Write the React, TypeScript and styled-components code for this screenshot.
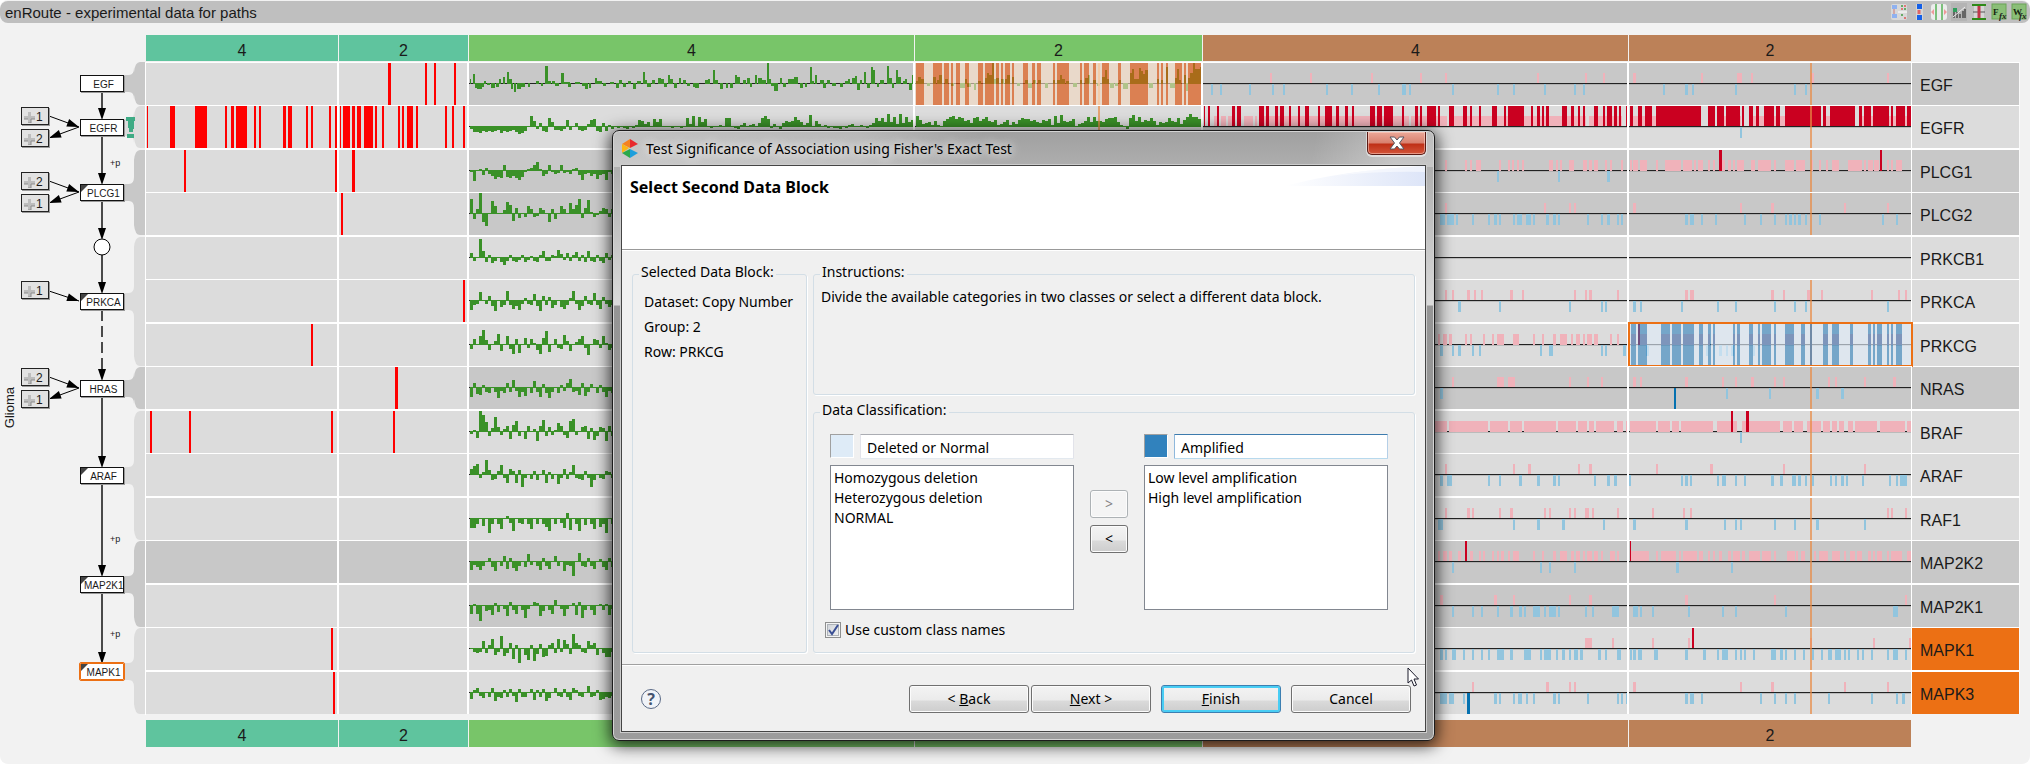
import React from 'react';
import styled, { createGlobalStyle, css } from 'styled-components';

const GlobalStyle = createGlobalStyle`
  * { box-sizing: border-box; }
  body { margin: 0; background: #fff; font-family: "Liberation Sans", Arial, sans-serif; color: #1a1a1a; }
  button, input, select { font: inherit; color: inherit; }
`;

/* ---------- view shell ---------- */

const View = styled.div`
  position: relative;
  min-height: 764px;
  padding-top: 1px;
  background: #f2f2f2;
  border-radius: 8px;
  overflow: hidden;
`;

const ViewBar = styled.header`
  display: flex;
  align-items: center;
  justify-content: space-between;
  height: 22px;
  padding: 0 3px 0 5px;
  background: #bfbfbf;
  border-radius: 8px;
`;

const ViewTitle = styled.h1`
  margin: 0;
  padding-top: 2px;
  font-size: 15px;
  line-height: 18px;
  font-weight: 400;
`;

const Tools = styled.div`
  display: flex;
  gap: 4px;
`;

const Tool = styled.button`
  display: block;
  width: 16px;
  height: 18px;
  padding: 0;
  border: 0;
  background: none;
`;

const Columns = styled.main`
  display: grid;
  grid-template-columns: 146px minmax(0, 1fr);
  padding: 12px 10px 16px 0;
`;

/* ---------- pathway ---------- */

const Pathway = styled.section`
  position: relative;
  height: 700px;
`;

const PathwayLines = styled.svg`
  position: absolute;
  inset: 0;
`;

const PathName = styled.div`
  position: absolute;
  left: 2px;
  top: 352px;
  writing-mode: vertical-rl;
  transform: rotate(180deg);
  font-size: 13px;
  line-height: 16px;
`;

const GeneNode = styled.div<{ $top: number; $selected?: boolean }>`
  position: absolute;
  left: 80px;
  top: ${(p) => p.$top}px;
  width: 44px;
  height: 17px;
  padding: 0 0 0 3px;
  border: 1px solid #111;
  background: #fff;
  box-shadow: 1px 1px 0 #999;
  font-size: 10px;
  line-height: 17px;
  text-align: center;
  white-space: nowrap;
  ${(p) => p.$selected && css`
    outline: 1px solid #ec7014;
    border-color: #ec7014;
    border-radius: 1px;
    box-shadow: none;
  `}
`;

const Fold = styled.span`
  position: absolute;
  left: 0;
  top: 0;
  border-top: 7px solid #444;
  border-right: 7px solid transparent;
`;

const Branch = styled.button<{ $top: number }>`
  position: absolute;
  left: 21px;
  top: ${(p) => p.$top}px;
  display: flex;
  align-items: center;
  gap: 1px;
  width: 28px;
  height: 18px;
  padding: 2px 0 0 2px;
  border: 1px solid #222;
  background: #e2e2e2;
  box-shadow: 1px 1px 0 #999;
  font-size: 12px;
  line-height: 14px;
`;

const Phospho = styled.span<{ $top: number }>`
  position: absolute;
  left: 110px;
  top: ${(p) => p.$top}px;
  font-size: 9px;
  line-height: 12px;
`;

/* ---------- data table ---------- */

const Table = styled.table`
  display: grid;
  grid-template-columns: 193fr 130fr 446fr 288fr 426fr 283fr 108px;
  grid-template-rows: 27px repeat(7, 43px 44px) 43px 33px;
  thead, tbody, tfoot, tr { display: contents; }
`;

const GroupHead = styled.th<{ $tone: string; $foot?: boolean }>`
  display: block;
  min-width: 0;
  height: ${(p) => (p.$foot ? 27 : 26)}px;
  margin-top: ${(p) => (p.$foot ? 6 : 0)}px;
  padding: 5px 0 0;
  border-right: 1px solid #f2f2f2;
  background: ${(p) => p.$tone};
  font-size: 16px;
  line-height: 22px;
  font-weight: 400;
  text-align: center;
`;

const Cell = styled.td<{ $dark: boolean; $even: boolean; $last: boolean }>`
  display: block;
  position: relative;
  min-width: 0;
  padding: 0;
  border-top: 1px solid #fff;
  border-bottom: ${(p) => (p.$even ? 1 : 0)}px solid #fff;
  border-right: ${(p) => (p.$last ? 1 : 2)}px solid #fff;
  background: ${(p) => (p.$dark ? '#c8c8c8' : '#dcdcdc')};
`;

const SelectedFrame = styled.span`
  position: absolute;
  inset: -2px -2px -1px -1px;
  border: 2px solid #ec7014;
`;

const RowName = styled.th<{ $dark: boolean; $even: boolean; $active: boolean }>`
  display: block;
  padding: 4px 0 0 8px;
  border-top: 1px solid #fff;
  border-bottom: ${(p) => (p.$even ? 1 : 0)}px solid #fff;
  border-right: 1px solid #fafafa;
  background: ${(p) => (p.$active ? '#ec7014' : p.$dark ? '#c8c8c8' : '#dcdcdc')};
  font-size: 16px;
  line-height: 38px;
  font-weight: 400;
  text-align: left;
`;

const Track = styled.svg`
  display: block;
  width: 100%;
  height: 42px;
  shape-rendering: crispEdges;
`;

type Bar = { x: number; w: number; h: number };

/* "x:w" pairs; the width may be left out */
const spans = (s: string, w: number): Bar[] =>
  s.split(' ').filter(Boolean).map((t) => {
    const [x, ww] = t.split(':').map(Number);
    return { x, w: ww || w, h: 0 };
  });

/* evenly spaced signed heights */
const steps = (s: string, x0: number, step: number): Bar[] =>
  s.split(' ').filter(Boolean).map((t, i) => ({ x: x0 + i * step, w: step, h: Number(t) }));

/* "x:w:h" triples */
const triples = (s: string): Bar[] =>
  s.split(' ').filter(Boolean).map((t) => {
    const [x, w, h] = t.split(':').map(Number);
    return { x, w, h };
  });

const Mutation = ({ from, to, data }: { from: number; to: number; data: string }) => (
  <Track viewBox={`${from} 0 ${to - from} 42`} preserveAspectRatio="none">
    {spans(data, 6).map((b) => <rect key={b.x} x={b.x} y="0" width={b.w} height="42" fill="#f00" />)}
  </Track>
);

const Expression = ({ from, to, bars, bands, pale, hover }: {
  from: number; to: number; bars: Bar[]; bands?: string; pale?: boolean; hover?: boolean;
}) => (
  <Track viewBox={`${from} 0 ${to - from} 42`} preserveAspectRatio="none">
    <rect x={from} y="20" width={to - from} height="1" fill="#222" />
    {bars.map((b) => (
      <rect key={b.x} x={b.x} y={b.h > 0 ? 20 - b.h : 20} width={b.w} height={b.h > 0 ? b.h + 1 : 1 - b.h} fill="#3a9128" />
    ))}
    {bands && <Bands from={from} to={to} bands={bands} strong="rgba(229,89,18,.65)" weak="rgba(255,228,203,.6)" />}
    {pale && <rect x="564" y="0" width="6" height="42" fill="#f5c79f" opacity=".8" />}
    {hover && <rect x="564" y="0" width="6" height="42" fill="#e88a45" opacity=".7" />}
  </Track>
);

const Bands = ({ from, to, bands, strong, weak }: {
  from: number; to: number; bands: string; strong: string; weak: string;
}) => {
  const list = spans(bands, 6);
  const gaps: Bar[] = [];
  let at = from;
  list.forEach((b) => { if (b.x > at) gaps.push({ x: at, w: b.x - at, h: 0 }); at = b.x + b.w; });
  if (at < to) gaps.push({ x: at, w: to - at, h: 0 });
  return (
    <>
      {gaps.map((b) => <rect key={b.x} x={b.x} y="0" width={b.w} height="42" fill={weak} />)}
      {list.map((b) => <rect key={b.x} x={b.x} y="0" width={b.w} height="42" fill={strong} />)}
    </>
  );
};

type Copies = { low?: string; loss?: string; high?: string; deep?: string };

const CopyNumber = ({ from, to, data, cover, bands, hover }: {
  from: number; to: number; data: Copies; cover?: boolean; bands?: string; hover?: boolean;
}) => (
  <Track viewBox={`${from} 0 ${to - from} 42`} preserveAspectRatio="none">
    <rect x={from} y="20" width={to - from} height="1" fill="#222" />
    <rect x={from} y="21" width={to - from} height="1" fill="#999" opacity=".5" />
    {spans(data.low ?? '', 5).map((b) => <rect key={b.x} x={b.x} y="10" width={b.w} height={cover ? 11 : 10} fill="#f0b2ba" />)}
    {spans(data.loss ?? '', 5).map((b) => <rect key={b.x} x={b.x} y="21" width={b.w} height="11" fill="#92c5de" />)}
    {spans(data.high ?? '', 5).map((b) => <rect key={b.x} x={b.x} y="0" width={b.w} height={cover ? 21 : 20} fill="#ca0020" />)}
    {spans(data.deep ?? '', 6).map((b) => <rect key={b.x} x={b.x} y="21" width={b.w} height="21" fill="#0571b0" />)}
    {bands && <Bands from={from} to={to} bands={bands} strong="rgba(49,130,189,.6)" weak="rgba(222,235,247,.65)" />}
    {hover && <rect x="1020" y="0" width="5" height="42" fill={bands ? '#6f89a6' : '#e88a45'} opacity={bands ? 1 : 0.7} />}
  </Track>
);

const SECOND_BANDS = '575:12 592:23 650:22 677:22 704:28 744:10 767 779 829 839:7 869:10 891 901:22 931 958:23 998:10 1053:12 1075:18 1120:7 1165:7 1177 1187:13 1212 1222 1234:15';

type Row = {
  name: string; dark: boolean; active?: boolean; cover?: boolean;
  m1?: string; m2?: string; e1: Bar[]; e2?: Bar[];
  c1: Copies; c2: Copies;
};

const E0 = 30;

const ROWS: Row[] = [
  {
    name: 'EGF', dark: true, m2: '1164:9 1275 1302 1362',
    e1: triples('30:3:4 39:6:9 45:6:-4 51:15:-5 66:6:-3 72:6:2 80:9:-1 93:12:-4 108:9:-3 117:6:4 129:6:6 140:7:11 147:9:4 153:6:-5 162:6:-8 171:12:-5 183:12:-3 204:6:-3 228:9:2 243:6:-2 255:9:17 264:9:2 276:8:2 285:12:-2 303:9:10 312:18:1 324:9:-3 345:15:1 366:9:-2 375:9:-5 387:6:-4 405:6:5 411:15:2 429:9:-2 450:12:1 468:9:-4 477:8:3 490:9:-3 505:9:2 520:9:-5 530:12:2 548:6:11 554:6:3 562:12:-3 575:9:3 594:9:5 603:9:4 612:9:-3 625:5:8 631:9:4 642:9:-4 657:6:5 670:9:3 680:9:-2 699:6:-3 705:12:-4 735:9:3 745:6:4 759:6:13 765:9:3 780:9:-5 798:6:-4 810:9:-4 825:6:8 831:9:6 850:8:3 860:9:5 870:6:-3 885:6:8 894:12:5 906:12:3 921:6:20 927:6:4 933:9:-2 942:12:-7 960:6:5 970:9:-3 985:6:4 991:12:4 1003:12:6 1020:9:-4 1035:6:-3 1050:6:16 1056:6:2 1065:6:8 1080:12:3 1089:9:-4 1101:9:3 1115:12:-2 1140:9:-3 1155:9:2 1164:6:4 1175:9:5 1185:6:7 1191:9:-6 1200:6:3 1212:6:11 1220:9:-4 1233:6:16 1239:6:13 1251:6:-3 1260:12:3 1281:6:17 1287:9:5 1296:6:-4 1308:6:13 1314:9:6 1328:7:2 1335:6:4 1347:9:-6 1356:3:8'),
    e2: triples('18:6:2 24:9:6 33:9:4 50:9:-2 69:9:6 81:6:3 87:9:8 105:9:4 123:9:-2 150:15:-4 165:6:4 171:12:-3 192:6:-6 204:9:2 225:6:5 231:6:10 237:9:8 246:6:20 252:6:4 258:9:5 273:9:4 285:6:4 292:9:8 306:6:6 320:9:-2 345:9:3 354:12:-4 370:9:3 384:9:3 405:9:-4 429:6:3 441:9:3 450:6:8 456:9:4 468:9:2 490:12:-3 510:6:3 525:9:5 533:6:8 549:9:3 560:9:-2 576:9:6 585:6:13 591:6:4 600:12:-4 615:9:-2 627:6:3 640:15:-5 660:6:10 666:6:14 672:15:4 687:6:15 693:6:12 699:6:9 705:9:13 718:12:-4 741:6:4 753:6:3 768:6:16 780:15:-4 795:6:5 801:6:14 807:6:3 822:6:8 828:6:-7 834:6:5 840:9:10 849:6:20 855:6:14 861:9:14 870:4:16'),
    c1: { low: '-324 -224 -72 49 112 341 460 505', loss: '-470 -448 -376 -318 -291 -184 -122 -55 5:10 22 129 241 281 358 433 455' },
    c2: { low: '580:7 749 839:12 874 1022:8 1212', loss: '655 709:8 727 834 981 1008' },
  },
  {
    name: 'EGFR', dark: false,
    m1: '441:3 510:15 585:36 675 693:9 708:33 762 777 849:9 864:12 918 933 987 1005',
    m2: '1020:3 1029:21 1056:9 1071:12 1092:27 1125 1146 1194 1206 1221:18 1248 1335 1356 1389',
    e1: steps('-2 -5 -5 -6 -4 -5 -4 -5 -4 -3 -6 -4 -5 -4 -3 -5 -7 -6 -4 0 10 5 -2 3 -4 -5 8 4 -3 -3 -4 -2 6 -3 0 3 -3 -4 -3 2 6 7 -4 -5 3 -4 1 -2 0 -1 0 -1 -2 0 -1 1 6 5 2 4 0 7 4 7 0 0 0 -1 0 0 -1 0 8 2 10 0 9 4 7 0 -1 0 0 1 0 8 8 0 -1 -2 1 3 0 1 2 0 3 8 10 7 -1 2 0 -2 3 5 4 5 9 6 4 1 3 11 0 5 2 0 1 -1 0 -1 -1 -2 0 -1 1 2 0 0 1 0 -1 1 3 8 5 8 4 12 4 9 2 12 3 9 4 6', E0, 9),
    e2: steps('10 6 2 3 4 1 5 1 0 5 7 9 10 7 9 8 5 6 3 8 9 5 7 9 5 4 6 1 2 4 6 1 4 2 6 8 7 7 5 6 4 3 6 5 7 1 10 3 11 5 4 5 7 0 2 3 5 9 4 9 5 5 4 7 8 8 9 4 1 0 -2 8 11 5 9 4 6 5 8 5 1 4 3 4 8 5 4 8 2 6 9 12 9 9 7 8', 18, 9),
    c1: {
      low: '-463:7 -445:12 -428:10 -388:22 -361 -351:373 27:90 134:175 309:154 470:83',
      high: '-488:3 -478 -455 -418:8 -406:10 -351:12 -333:8 -311:8 -299:10 -276 -254 -236:10 -204 -187:17 -159:8 -137:8 -119 -75:12 -57:12 -40:22 5 37:8 50 67:23 95 122:12 157:10 174 197 229:12 259 269:40 326 341:7 353 363:8 403:12 426:7 443 455 483:10 505 515:13 533:7 545 562',
    },
    c2: {
      low: '580:12 602:8 627:122 789:60 869:180 1053:40 1142:130', loss: '846',
      high: '572:8 592:10 610:17 637:112 767:17 789:17 811:35 851 869:10 886:8 906:25 936:10 958:90 1053:7 1070:62 1142:8 1155:17 1177:40 1222 1234:23 1262:10',
    },
  },
  {
    name: 'PLCG1', dark: true, cover: true, m1: '552 1005', m2: '1056:9',
    e1: steps('-1 -10 0 1 -4 2 -3 -5 -8 -6 -7 5 -6 -7 -5 -7 -9 -6 -1 1 2 5 8 1 -5 -3 5 -1 -3 -2 5 -2 -1 -3 1 2 -4 -9 -3 -2 -5 -3 -8 -4 -3 -9 -1 -3 -4', E0, 9),
    c1: { low: '112 162 174 189:12 246 269 280 291 304 371:10 388 398 421:12 455:10 470:8 483:10 510 522 550', loss: '241 393 515:8' },
    c2: { low: '572 580:12 597:18 638 659:40 704:24 733 743:10 767 780 802:6 816:8 829 839:17 873:10 891:32 931 958:23 986:22 1022:7 1043 1060 1075:19 1115:35 1155 1166:11 1180:12 1212 1221 1234:15', high: '794:7 1195' },
  },
  {
    name: 'PLCG2', dark: true, m2: '1023',
    e1: steps('14 -5 4 20 -8 -12 0 12 7 0 0 3 11 8 -7 5 -4 0 -3 7 4 -3 -2 5 3 0 -8 4 -5 0 7 4 0 10 4 8 14 -4 5 13 1 -3 -1 2 5 4 -3 4', E0, 9),
    c1: { low: '112 358 421 433', loss: '99:13 117:17 139 179 219 234:7 246 281 291:13 314:12 331 363:8 381:7 393 465 500 515:8 540 550' },
    c2: { low: '580:8 846 924:7 1105 1212', loss: '709:8 722:10 749 784 856 896 931 958 968:8 981 991:7 1008 1043 1200 1234' },
  },
  {
    name: 'PRKCB1', dark: false,
    e1: steps('4 -3 0 18 6 -4 2 -5 -3 0 -4 -7 -3 2 -3 -4 -2 2 -4 -2 1 -3 -4 2 6 -3 -3 2 1 7 3 -2 4 -3 2 5 -3 2 -4 6 -3 -4 2 -3 -5 4 -2 2', E0, 9),
    c1: {}, c2: {},
  },
  {
    name: 'PRKCA', dark: false, m2: '1389',
    e1: steps('-9 -4 -3 8 0 -3 4 -5 -10 0 -6 -4 9 -4 -8 -5 -9 -3 2 -3 -4 6 -5 -10 4 -4 3 -7 -4 0 -6 -8 -4 2 9 -3 -9 -5 4 -3 -4 7 -4 -8 3 -3 -6 -4', E0, 9),
    c1: { low: '112 129 167:7 184 202 274:8 304 433 460 470:8 540', loss: '144:8 246 421 500 510' },
    c2: { low: '709:8 722:10 924:7 953 1013:7 1048 1172 1239 1257', loss: '580:7 597 699 789 834 931 981 1008 1212' },
  },
  {
    name: 'PRKCG', dark: false, cover: true, m1: '933',
    e1: steps('-4 5 0 8 14 4 -5 0 3 10 -6 0 8 -4 -9 5 -8 0 6 -3 5 1 -5 -9 6 13 -7 0 5 -3 -4 9 3 -6 0 2 5 8 -3 -10 0 5 4 -3 8 1 -5 -3', E0, 9),
    c1: { low: '95 107:10 122:7 162 174 207 229 241:18 281:15 331 353 381:7 398:18 426 438:10 455 465:12 483:10 523 540', loss: '99:8 129 144:8 179 197 348 371:10 500 510 556:7' },
    c2: { low: '575:12 592:23 650:22 677:22 704:28 744:10 767 779 829 839:7 869:10 891 901:22 931 958:23 998:10 1053:12 1075:18 1120:7 1165:7 1177 1187:13 1212 1222 1234:15', high: '592', loss: '612:8 762 794:7 811 824:7 879' },
  },
  {
    name: 'NRAS', dark: true, m2: '1185:9',
    e1: steps('-9 4 -6 -7 2 -4 -5 0 -4 -10 -3 -5 4 -4 7 -3 -9 -4 -8 0 -5 6 -4 -9 3 -5 -10 -4 0 -5 2 -3 4 8 -4 -3 -7 4 -8 -4 3 0 -5 2 -4 -9 -3 -5', E0, 9),
    c1: { low: '129 241:18 269:17 421 465 500', loss: '99:8' },
    c2: { low: '580:8 597 709:8 801 834 873:7 931 953 1065 1083 1155 1227:7', loss: '811 918 1035:8 1098:7', deep: '682' },
  },
  {
    name: 'BRAF', dark: false, cover: true, m1: '450 567 993', m2: '1179',
    e1: steps('-2 1 -6 20 16 9 -4 3 14 4 -3 2 5 -7 6 10 -4 0 -7 5 0 2 -9 5 11 -4 4 -3 1 8 5 -3 -6 10 12 -3 0 4 5 -7 3 -8 -4 4 3 -9 5 -4', E0, 9),
    c1: { low: '80:37 122:97 224:45 274:30 309:79 393:45 443:22 470:13 488:45 540:15 562:4' },
    c2: { low: '572:66 642:30 677:17 699:80 789:50 851:95 953:23 981:22 1013:35 1053:17 1075:13 1093:12 1115:12 1132:55 1195:62 1262:10', high: '824 861:8', loss: '846' },
  },
  {
    name: 'ARAF', dark: false,
    e1: steps('5 8 10 -3 2 14 4 -5 -4 3 9 -3 -8 5 3 -8 4 -12 -3 0 -4 3 -5 0 4 -8 2 -4 0 -9 -3 5 -4 2 9 -3 -4 -5 3 -3 -12 -5 0 -3 -4 3 2 -3', E0, 9),
    c1: { low: '112 281 319:7 443 470:8', loss: '99:8 117:12 219 246 296:8 341:7 381:7 393 483 515:8 533:7' },
    c2: { low: '637 772:7 953 1155', loss: '570 699 709:8 722 789 801:10 834 856 924:7 946:7 976:10 991:7 1008 1025 1070 1083 1098:7 1110 1150 1217 1234 1244:18' },
  },
  {
    name: 'RAF1', dark: false,
    e1: steps('-9 -9 -5 0 -7 0 -14 -5 0 -5 -10 0 2 -4 -12 0 -4 -5 0 -5 -10 0 -5 0 -5 -8 -12 0 -5 0 -4 -9 5 -11 0 -5 -12 0 -6 0 -5 -10 0 -8 -5 -14 0 -5', E0, 9),
    c1: { low: '112 167:7 179 246 274:8 358 371 421 433 460:10 478 540', loss: '95:12 281 341:7 403:8 505' },
    c2: { low: '627 704 722 1212 1222 1257', loss: '580:8 709:8 806 834 846 931 981 1035:8 1155' },
  },
  {
    name: 'MAP2K2', dark: true,
    e1: steps('-8 -3 -5 -8 -4 0 3 -5 -9 0 -4 5 -7 3 -6 -9 -4 0 -5 7 -3 0 -4 -8 3 -4 -7 0 5 -4 0 -9 -3 -4 -14 0 8 -4 -5 3 -4 -7 0 2 -5 -8 3 -5', E0, 9),
    c1: { low: '95 107:10 122:7 144:8 174:7 197 207 229 241 251:8 269 281:15 331 353 381:7 398:18 426:8 438:10 455 465:12 483:10 500 523:12 540', loss: '129 348 371 433', high: '162' },
    c2: { low: '575:45 637 650:37 694 704:35 744:10 767 779 794:7 816:8 829:17 851:7 869:27 901:22 931 963:20 986 998:10 1030 1043:22 1075:20 1105 1120:12 1137:13 1165:7 1177 1187:13 1212 1222:27 1262:10', high: '572:4', loss: '687:7 824' },
  },
  {
    name: 'MAP2K1', dark: true,
    e1: steps('-8 1 -8 -15 0 -5 -4 -9 2 -6 0 -3 -10 3 -4 -8 0 -4 -12 -3 0 3 2 -10 -5 0 -4 -8 5 0 -3 -10 -3 0 2 -9 3 -12 -4 0 -4 -9 0 1 -4 1 -9 -3', E0, 9),
    c1: { low: '99:8 234:7 281 421 470:8', loss: '129 179 202 241 274:7 296:8 309 331:17 358 371:17 393 460 478 528:17' },
    c2: { low: '709:8 931 1257', loss: '580:12 597 627 717 801 834 958 1227:12' },
  },
  {
    name: 'MAPK1', dark: false, active: true, m1: '993',
    e1: steps('0 -3 -4 -3 7 -4 3 9 -6 -3 12 -7 -4 5 -10 3 -14 0 -6 -11 3 -12 -5 4 -8 -7 3 5 -4 9 -3 8 4 -5 14 5 3 -3 -4 7 3 5 -6 0 -4 -8 -8 -3', E0, 9),
    c1: { low: '460:18 528', loss: '99:8 112 129:10 157 179 202 219 241:18 274:7 309:17 348 358:18 388 403:8 421 433:10 448:7 493:7 510 540:10' },
    c2: { low: '627 717 1020 1177 1268:4', high: '727', loss: '572 580:7 592:10 632:10 709:8 754:8 789 801:15 834 846 856 879 923:13 946:7 958 981 1003 1025 1048 1065:10 1083:15 1105 1115 1137 1150 1172 1212 1227:12 1257' },
  },
  {
    name: 'MAPK3', dark: false, active: true, m1: '999',
    e1: steps('-6 2 4 -3 -5 0 -4 4 -8 -4 -5 2 -4 3 -3 -9 3 -4 -4 0 3 -7 2 -4 3 -8 -5 0 4 -3 -4 3 -4 -7 4 2 -3 -4 0 6 -4 -3 2 -7 -6 -4 -5 -3', E0, 9),
    c1: { low: '179 363:7 421 433', loss: '99:18 122:12 157 234:7 246 281 294:10 314 331 381:7 393 465 540 550 562', deep: '167:7' },
    c2: { low: '580:7 846 923:8 1105 1212', loss: '709:8 722:10 749 896 931 958 981 1065 1172 1234 1249:8' },
  },
];

const GROUPS = [
  { label: '4', tone: '#5fc49e' }, { label: '2', tone: '#5fc49e' },
  { label: '4', tone: '#78c569' }, { label: '2', tone: '#78c569' },
  { label: '4', tone: '#bc8158' }, { label: '2', tone: '#bc8158' },
];

const DataTable = () => (
  <Table>
    <thead>
      <tr>{GROUPS.map((g, i) => <GroupHead key={i} $tone={g.tone} scope="col">{g.label}</GroupHead>)}<td /></tr>
    </thead>
    <tbody>
      {ROWS.map((r, i) => {
        const even = i % 2 === 1;
        const quiet = r.name === 'MAP2K2';
        const second = r.name === 'PRKCG';
        return (
          <tr key={r.name}>
            <Cell $dark={quiet} $even={even} $last={false}><Mutation from={438} to={1011} data={r.m1 ?? ''} /></Cell>
            <Cell $dark={quiet} $even={even} $last={false}><Mutation from={1017} to={1401} data={r.m2 ?? ''} /></Cell>
            <Cell $dark={r.dark} $even={even} $last={false}><Expression from={27} to={1359} bars={r.e1} /></Cell>
            <Cell $dark={r.dark} $even={even} $last={false}>
              <Expression
                from={15} to={873} bars={r.e2 ?? []} hover={i === 1} pale={i === 0}
                bands={i === 0 ? '18:24 69:27 102:15 123 138:12 165:12 204:15 225:27 258:9 273 285:15 306 339:15 366:9 381:12 429 441:36 510 522:15 549:9 576:21 624:9 660:54 741 753 768 795:21 822 834:39' : undefined}
              />
            </Cell>
            <Cell $dark={r.dark} $even={even} $last={false}><CopyNumber from={-490} to={565} data={r.c1} cover={r.cover} /></Cell>
            <Cell $dark={r.dark} $even={even} $last>
              <CopyNumber from={570} to={1272} data={r.c2} cover={r.cover} hover={r.name !== 'PRKCB1'} bands={second ? SECOND_BANDS : undefined} />
              {second && <SelectedFrame />}
            </Cell>
            <RowName scope="row" $dark={r.dark} $even={even} $active={!!r.active}>{r.name}</RowName>
          </tr>
        );
      })}
    </tbody>
    <tfoot>
      <tr>{GROUPS.map((g, i) => <GroupHead key={i} $tone={g.tone} $foot scope="col">{g.label}</GroupHead>)}<td /></tr>
    </tfoot>
  </Table>
);

/* ---------- pathway drawing ---------- */

const NODES = [
  { name: 'EGF', top: 40, from: 27, to: 70, dark: true },
  { name: 'EGFR', top: 84, from: 71, to: 113, dark: false },
  { name: 'PLCG1', top: 149, from: 115, to: 200, dark: true, fold: true },
  { name: 'PRKCA', top: 258, from: 202, to: 331, dark: false, fold: true },
  { name: 'HRAS', top: 345, from: 332, to: 374, dark: true },
  { name: 'ARAF', top: 432, from: 376, to: 505, dark: false, fold: true },
  { name: 'MAP2K1', top: 541, from: 506, to: 592, dark: true, fold: true },
  { name: 'MAPK1', top: 628, from: 593, to: 679, dark: false, fold: true, selected: true },
];

const BRANCHES = [
  { top: 72, n: 1 }, { top: 94, n: 2 }, { top: 137, n: 2 }, { top: 159, n: 1 },
  { top: 246, n: 1 }, { top: 333, n: 2 }, { top: 355, n: 1 },
];

const EDGES: [number, number, boolean?][] = [
  [57, 84], [101, 149], [166, 204], [219, 258], [275, 345, true], [362, 432], [449, 541], [558, 628],
];

const SIDE: [number, number, number, number][] = [
  [49, 81, 79, 92], [79, 92, 49, 103], [49, 146, 79, 157], [79, 157, 49, 168],
  [49, 256, 79, 266], [49, 342, 79, 353], [79, 353, 49, 364],
];

const funnel = (y1: number, y2: number, a: number, b: number) =>
  `M124 ${y1}H129Q134 ${y1} 134 ${y1 - 7}V${a + 10}Q135 ${a} 140 ${a}H145V${b}H140Q135 ${b} 134 ${b - 10}V${y2 + 7}Q134 ${y2} 129 ${y2}H124Z`;

const PathwayMap = () => (
  <Pathway aria-label="Pathway">
    <PathwayLines width="146" height="700" viewBox="0 0 146 700">
      {NODES.map((n) => (
        <path key={n.name} d={funnel(n.top, n.top + 17, n.from, n.to)} fill={n.dark ? '#c8c8c8' : '#dcdcdc'} />
      ))}
      <path d="M126 82h9v4h-1v8h-1v3h-4v-4h-1v-7h-2zM127 99h7v4h-7z" fill="#3fab85" />
      <rect x="145" y="27" width="1" height="653" fill="#fff" />
      {EDGES.map(([a, b, dashed]) => (
        <g key={a}>
          <line x1="102" x2="102" y1={a} y2={b - 10} stroke="#4a4a4a" strokeWidth="2" strokeDasharray={dashed ? '11 5' : undefined} />
          <path d={`M98 ${b - 11}h8l-4 12z`} fill="#000" />
        </g>
      ))}
      {SIDE.map(([x1, y1, x2, y2]) => {
        const deg = (Math.atan2(y2 - y1, x2 - x1) * 180) / Math.PI;
        return (
          <g key={`${x1}-${y1}`}>
            <line x1={x1} y1={y1} x2={x2} y2={y2} stroke="#000" />
            <path d="M0 0L-12 -4V4Z" transform={`translate(${x2} ${y2}) rotate(${deg})`} fill="#000" />
          </g>
        );
      })}
      <circle cx="102" cy="212" r="8" fill="#fff" stroke="#000" />
    </PathwayLines>
    <PathName>Glioma</PathName>
    {NODES.map((n) => (
      <GeneNode key={n.name} $top={n.top} $selected={n.selected}>
        {n.fold && <Fold />}{n.name}
      </GeneNode>
    ))}
    {BRANCHES.map((b) => (
      <Branch key={b.top} type="button" $top={b.top}>
        <svg width="11" height="11" viewBox="0 0 11 11"><path d="M4 0h3v4h4v3H7v4H4V7H0V4h4z" fill="#bdbdbd" /><path d="M4 11h3V7h4M0 7h4" fill="none" stroke="#8c8c8c" /></svg>
        {b.n}
      </Branch>
    ))}
    <Phospho $top={122}>+p</Phospho>
    <Phospho $top={498}>+p</Phospho>
    <Phospho $top={593}>+p</Phospho>
  </Pathway>
);

/* ---------- toolbar icons ---------- */

const MapIcon = () => (
  <svg width="16" height="18" viewBox="0 0 16 18">
    <rect x="0" y="1" width="16" height="16" rx="2" fill="#d8d8d8" />
    <path d="M1 2h5v4H1zM1 11h5v4H1z" fill="#8fb1f0" /><path d="M3 6v5" stroke="#c77" />
    <path d="M10 2h2v2h-2zM13 5h2v2h-2zM10 11h2v2h-2z" fill="#6a6" /><path d="M13 2h2v2h-2zM10 5h2v2h-2zM13 14h2v2h-2z" fill="#d77" /><path d="M7 9h9" stroke="#fff" />
  </svg>
);
const LinkIcon = () => (
  <svg width="16" height="18" viewBox="0 0 16 18">
    <rect x="5" y="1" width="7" height="16" fill="#d4d4d4" /><path d="M6 1h5v5H6zM6 12h5v5H6z" fill="#1560e8" /><path d="M8 7v4" stroke="#d66" strokeWidth="3" />
  </svg>
);
const FitWidthIcon = () => (
  <svg width="16" height="18" viewBox="0 0 16 18">
    <rect x="0" y="1" width="16" height="16" rx="3" fill="#ececec" /><path d="M5 1v16M11 1v16" stroke="#7cc07c" strokeWidth="2" /><path d="M0 9l3-3v6zM16 9l-3-3v6z" fill="#e99" />
  </svg>
);
const ChartIcon = () => (
  <svg width="16" height="18" viewBox="0 0 16 18">
    <rect width="16" height="18" fill="#b4b4b4" /><path d="M3 15V7M6 15V9M9 15v-4M12 15V8M14 15V6" stroke="#666" strokeWidth="2" /><path d="M2 5h4v4H2z" fill="#2e9e5c" /><path d="M2 14L14 4" stroke="#eee" />
  </svg>
);
const FitHeightIcon = () => (
  <svg width="16" height="18" viewBox="0 0 16 18">
    <rect x="3" y="2" width="10" height="14" fill="#d6d6d6" /><path d="M1 2h14M1 16h14" stroke="#2f8a18" strokeWidth="2" /><path d="M2 9h12" stroke="#555" /><path d="M8 3v12" stroke="#c0394b" strokeWidth="3" />
  </svg>
);
const TestIcon = ({ letter }: { letter: string }) => (
  <svg width="16" height="18" viewBox="0 0 16 18">
    <rect x="1" y="1" width="14" height="15" fill="#8bbf78" stroke="#6aa457" />
    <text x="2" y="12" fontFamily="Liberation Serif, serif" fontWeight="700" fontSize="9" fill="#14240f">{letter}</text>
    <text x="8" y="16" fontFamily="Liberation Serif, serif" fontStyle="italic" fontWeight="700" fontSize="9" fill="#222">fx</text>
  </svg>
);

/* ---------- dialog ---------- */

const Dialog = styled.div`
  position: absolute;
  left: calc(50% - 403px);
  top: 130px;
  width: 823px;
  padding: 1px 8px 8px;
  border: 1px solid #1c1c1c;
  border-radius: 7px;
  background:
    linear-gradient(100deg, rgba(255,255,255,.35) 0, rgba(255,255,255,.25) 30%, rgba(0,0,0,0) 45%, rgba(0,0,0,0) 85%, rgba(255,255,255,.3) 95%) top / 100% 36px no-repeat,
    linear-gradient(#a0a0a0 0, #b0b0b0 40px, #dadada 174px, #959595 175px, #9c9c9c);
  box-shadow: inset 0 0 0 1px #d4d4d4, 0 3px 16px 2px rgba(0, 0, 0, 0.75);
  font-family: "Noto Sans", "Open Sans", sans-serif;
  font-size: 14px;
  line-height: 20px;
  color: #000;
`;

const TitleBar = styled.div`
  display: flex;
  height: 33px;
`;

const TitleText = styled.h2`
  flex: 1;
  margin: 0;
  padding: 6px 0 0 7px;
  font-size: 14px;
  line-height: 22px;
  font-weight: 400;
  text-shadow: 0 0 8px #fff, 0 0 12px #eee;
`;

const Logo = styled.svg`
  margin: 7px 0 0;
`;

const CloseButton = styled.button`
  display: flex;
  justify-content: center;
  align-items: center;
  width: 59px;
  height: 23px;
  padding: 0;
  border: 1px solid #5a1a14;
  border-top: 0;
  border-radius: 0 0 5px 5px;
  background: linear-gradient(#eba898, #d8806e 11px, #bf2f16 12px, #d3553a);
  box-shadow: inset 0 0 0 1px rgba(255, 220, 210, 0.5), 0 1px 0 1px rgba(255, 255, 255, 0.5);
`;

const Body = styled.div`
  border: 1px solid #444;
  outline: 1px solid #ccc;
  background: #f0f0f0;
`;

const Banner = styled.div`
  position: relative;
  height: 84px;
  padding: 9px 8px;
  border-bottom: 1px solid #999;
  background: #fff;
`;

const BannerTitle = styled.h3`
  margin: 0;
  font-size: 16px;
  line-height: 24px;
  font-weight: 700;
`;

const Swoosh = styled.svg`
  position: absolute;
  right: 0;
  top: 0;
`;

const Panels = styled.div`
  display: grid;
  grid-template-columns: 175px minmax(0, 1fr);
  gap: 6px;
  padding: 13px 10px 11px;
  border-top: 1px solid #fff;
`;

const Stack = styled.div`
  display: flex;
  flex-direction: column;
  gap: 7px;
`;

const Group = styled.fieldset<{ $height?: number }>`
  min-width: 0;
  margin: 0;
  padding: 0 6px;
  height: ${(p) => (p.$height ? `${p.$height}px` : 'auto')};
  border: 1px solid #d3dee6;
  border-radius: 3px;
  box-shadow: 1px 1px 0 #fff;
`;

const Legend = styled.legend`
  padding: 0 2px 4px;
  line-height: 16px;
`;

const Facts = styled.ul`
  margin: 0;
  padding: 5px 5px;
  list-style: none;
  line-height: 25px;
  white-space: nowrap;
`;

const Text = styled.p`
  margin: 0;
  padding: 3px 1px;
`;

const Classes = styled.div`
  display: grid;
  grid-template-columns: 244px 38px 244px;
  column-gap: 16px;
  padding: 12px 10px 0;
`;

const ClassColumn = styled.div`
  display: grid;
  grid-template-columns: 24px minmax(0, 1fr);
  gap: 6px;
`;

const Swatch = styled.span<{ $color: string }>`
  height: 24px;
  border: 1px solid;
  border-color: #a0a0a0 #fff #fff #a0a0a0;
  background: ${(p) => p.$color};
`;

const NameInput = styled.input<{ $focused?: boolean }>`
  min-width: 0;
  height: 25px;
  padding: 1px 6px 0;
  border: 1px solid;
  border-color: ${(p) => (p.$focused ? '#3d7bad #b5cfe7 #b7d9ed #8fb8dc' : '#abadb3 #e2e3ea #e3e9ef #e2e3ea')};
  border-radius: 1px;
  background: #fff;
  outline: 0;
`;

const List = styled.select`
  grid-column: 1 / -1;
  height: 145px;
  padding: 2px 3px;
  border: 1px solid #828790;
  border-radius: 0;
  background: #fff;
  overflow: hidden;
  outline: 0;
  option { padding: 0; min-height: 20px; line-height: 20px; }
`;

const Movers = styled.div`
  display: flex;
  flex-direction: column;
  gap: 7px;
  padding-top: 56px;
`;

const Button = styled.button<{ $primary?: boolean }>`
  height: 28px;
  padding: 0;
  border: 1px solid ${(p) => (p.$primary ? '#3c7fb1' : '#707070')};
  border-radius: 3px;
  background: linear-gradient(#f3f3f3, #ebebeb 14px, #dadada 15px, #cdcdcd);
  box-shadow: inset 0 0 0 ${(p) => (p.$primary ? '2px #48cdf4' : '1px #fcfcfc')};
  line-height: 24px;
  &:disabled { border-color: #adb2b5; background: #f4f4f4; color: #838383; }
`;

const CheckLabel = styled.label`
  position: relative;
  display: flex;
  align-items: center;
  gap: 4px;
  margin: 10px 0 0 5px;
`;

const CheckBox = styled.input`
  appearance: none;
  width: 16px;
  height: 16px;
  margin: 0;
  border: 1px solid #8e8f8f;
  background: linear-gradient(135deg, #cbcfd5, #f6f6f6);
  box-shadow: inset 0 0 0 1px #f4f4f4, inset 0 0 0 2px #aeb3b9;
`;

const CheckMark = styled.svg`
  position: absolute;
  left: 3px;
  top: 4px;
  pointer-events: none;
`;

const Footer = styled.div`
  display: flex;
  align-items: center;
  height: 67px;
  padding: 1px 14px 0 19px;
  border-top: 1px solid #a0a0a0;
  box-shadow: inset 0 1px 0 #fff;
  ${Button} { width: 120px; }
`;

const HelpButton = styled.button`
  display: block;
  width: 20px;
  height: 20px;
  margin-right: auto;
  padding: 0;
  border: 1px solid #5a6a86;
  border-radius: 50%;
  background: #f0f3f8;
  color: #44546f;
  font-weight: 700;
  font-size: 16px;
  line-height: 18px;
`;

const Pair = styled.div`
  display: flex;
  gap: 2px;
  margin-right: 10px;
`;

const Trailing = styled.div`
  display: flex;
  gap: 10px;
`;

const Pointer = styled.svg`
  position: absolute;
  left: 794px;
  top: 536px;
  pointer-events: none;
`;

const TestDialog = () => (
  <Dialog role="dialog" aria-labelledby="dialog-title">
    <TitleBar>
      <Logo width="18" height="19" viewBox="0 0 18 19">
        <path d="M9 0v9L1 5z" fill="#f58220" /><path d="M9 0l8 5-8 4z" fill="#e8292d" />
        <path d="M1 5l7 4-7 5z" fill="#fbb614" /><path d="M9 10v9l-8-5z" fill="#2aa84a" /><path d="M9 10l8 4-8 5z" fill="#1d9fdc" />
      </Logo>
      <TitleText id="dialog-title">Test Significance of Association using Fisher's Exact Test</TitleText>
      <CloseButton type="button" aria-label="Close">
        <svg width="16" height="14" viewBox="0 0 16 14"><path d="M1 1h4.500l2.500 3 2.500-3H15l-4.500 6L15 13h-4.500L8 10l-2.500 3H1l4.500-6z" fill="#fff" stroke="#54555f" /></svg>
      </CloseButton>
    </TitleBar>
    <Body>
      <Banner>
        <Swoosh width="140" height="20" viewBox="0 0 140 20">
          <defs><linearGradient id="sw"><stop offset="0" stopColor="#fff" /><stop offset="1" stopColor="#dde5f8" /></linearGradient></defs>
          <path d="M0 20Q60 4 140 0V20Z" fill="url(#sw)" /><path d="M50 10Q90 2 140 0V6Q90 5 50 10Z" fill="#fff" opacity=".5" />
        </Swoosh>
        <BannerTitle>Select Second Data Block</BannerTitle>
      </Banner>
      <Panels>
        <Group>
          <Legend>Selected Data Block:</Legend>
          <Facts><li>Dataset: Copy Number</li><li>Group: 2</li><li>Row: PRKCG</li></Facts>
        </Group>
        <Stack>
          <Group $height={131}>
            <Legend>Instructions:</Legend>
            <Text>Divide the available categories in two classes or select a different data block.</Text>
          </Group>
          <Group $height={251}>
            <Legend>Data Classification:</Legend>
            <Classes>
              <ClassColumn>
                <Swatch $color="#deebf7" />
                <NameInput aria-label="First class name" defaultValue="Deleted or Normal" />
                <List multiple aria-label="First class">
                  <option>Homozygous deletion</option><option>Heterozygous deletion</option><option>NORMAL</option>
                </List>
              </ClassColumn>
              <Movers>
                <Button type="button" disabled>&gt;</Button>
                <Button type="button">&lt;</Button>
              </Movers>
              <ClassColumn>
                <Swatch $color="#3182bd" />
                <NameInput $focused aria-label="Second class name" defaultValue="Amplified" />
                <List multiple aria-label="Second class">
                  <option>Low level amplification</option><option>High level amplification</option>
                </List>
              </ClassColumn>
            </Classes>
            <CheckLabel>
              <CheckBox type="checkbox" defaultChecked />
              <CheckMark width="11" height="12" viewBox="0 0 11 12"><path d="M1 6l3 4 6-9" fill="none" stroke="#3a4f94" strokeWidth="2" /></CheckMark>
              Use custom class names
            </CheckLabel>
          </Group>
        </Stack>
      </Panels>
      <Footer>
        <HelpButton type="button" aria-label="Help">?</HelpButton>
        <Pair>
          <Button type="button">&lt; <u>B</u>ack</Button>
          <Button type="button"><u>N</u>ext &gt;</Button>
        </Pair>
        <Trailing>
          <Button type="button" $primary><u>F</u>inish</Button>
          <Button type="button">Cancel</Button>
        </Trailing>
      </Footer>
    </Body>
    <Pointer width="13" height="20" viewBox="0 0 13 20">
      <path d="M1 1v15l3.500-3 2.500 6 2.500-1-2.500-6h4.500z" fill="#fff" stroke="#1a1a2a" />
    </Pointer>
  </Dialog>
);

export default function App() {
  return (
    <View>
      <GlobalStyle />
      <ViewBar>
        <ViewTitle>enRoute - experimental data for paths</ViewTitle>
        <Tools>
          <Tool type="button" aria-label="Show map"><MapIcon /></Tool>
          <Tool type="button" aria-label="Link"><LinkIcon /></Tool>
          <Tool type="button" aria-label="Fit width"><FitWidthIcon /></Tool>
          <Tool type="button" aria-label="Chart"><ChartIcon /></Tool>
          <Tool type="button" aria-label="Fit height"><FitHeightIcon /></Tool>
          <Tool type="button" aria-label="Fisher test"><TestIcon letter="F" /></Tool>
          <Tool type="button" aria-label="Wilcoxon test"><TestIcon letter="W" /></Tool>
        </Tools>
      </ViewBar>
      <Columns>
        <PathwayMap />
        <DataTable />
      </Columns>
      <TestDialog />
    </View>
  );
}
